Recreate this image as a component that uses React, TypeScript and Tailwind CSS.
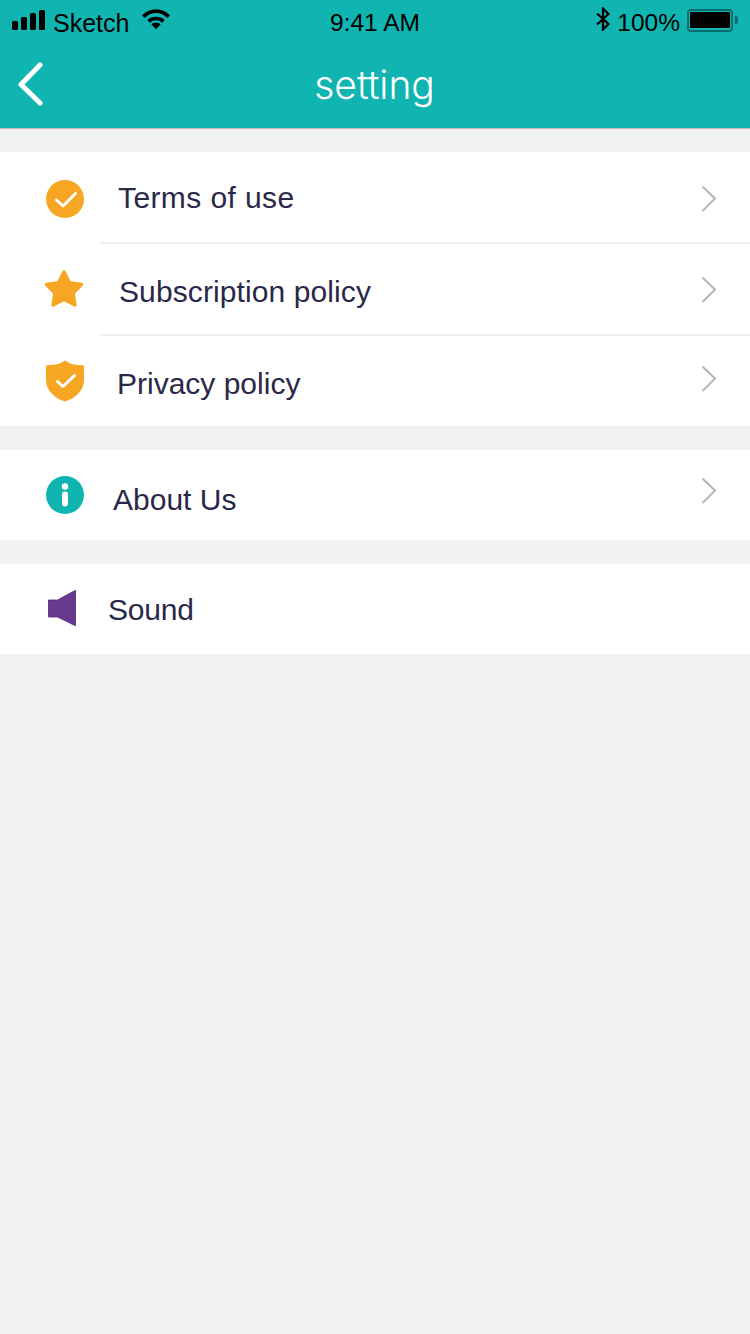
import { ReactNode } from 'react';

const Chevron = ({ className }: { className?: string }) => (
  <svg width="18" height="28" viewBox="0 0 18 28" fill="none" className={className}>
    <path d="M2.5 1.5L15 13.5L2.5 26" stroke="#b5b5b5" strokeWidth="2" />
  </svg>
);

const CheckCircle = () => (
  <svg width="38" height="38" viewBox="0 0 38 38">
    <circle cx="19" cy="19" r="19" fill="#f6a623" />
    <path d="M10.5 20L17 26L29.5 13.5" fill="none" stroke="#fff" strokeWidth="3" strokeLinecap="round" strokeLinejoin="round" />
  </svg>
);

const Star = () => (
  <svg width="42" height="40" viewBox="0 0 42 40">
    <path
      d="M21 3L26.4 13.8L38.5 15.5L30 24L32 36L21 30.4L10 36L12 24L3.5 15.5L15.6 13.8Z"
      fill="#f6a623"
      stroke="#f6a623"
      strokeWidth="3.5"
      strokeLinejoin="round"
    />
  </svg>
);

const Shield = () => (
  <svg width="38" height="42" viewBox="0 0 38 42">
    <path
      d="M19 0.5C20.5 0.5 22 3.5 28 4.6C31 5.1 34 5.2 36.5 5.2C37.5 5.2 38 5.8 38 6.8V20C38 31 28 39 19 41.5C10 39 0 31 0 20V6.8C0 5.8 0.5 5.2 1.5 5.2C4 5.2 7 5.1 10 4.6C16 3.5 17.5 0.5 19 0.5Z"
      fill="#f6a623"
    />
    <path d="M11.5 21.5L17 26.5L28.5 15.5" fill="none" stroke="#fff" strokeWidth="3" strokeLinecap="round" strokeLinejoin="round" />
  </svg>
);

const Info = () => (
  <svg width="38" height="38" viewBox="0 0 38 38">
    <circle cx="19" cy="19" r="19" fill="#10b4b0" />
    <circle cx="19" cy="10.5" r="3.2" fill="#fff" />
    <rect x="16" y="15.5" width="6" height="15" rx="3" fill="#fff" />
  </svg>
);

const Speaker = () => (
  <svg width="28" height="36" viewBox="0 0 28 36">
    <path d="M0.5 10H9.5L27 0.5C27.5 0.3 27.8 0.6 27.8 1.2V35C27.8 35.6 27.5 35.8 27 35.6L9.5 27H0.5Z" fill="#653a8e" stroke="#55247f" strokeWidth="0.8" />
  </svg>
);

const Row = ({
  icon,
  label,
  iconBox,
  textClass,
  chevronClass,
  iconClass,
}: {
  icon: ReactNode;
  label: string;
  iconBox: string;
  textClass: string;
  chevronClass?: string;
  iconClass?: string;
}) => (
  <div className="flex h-[90px] items-center bg-white pr-[32px]">
    <div className={`flex shrink-0 items-center justify-center ${iconBox} ${iconClass ?? ''}`}>{icon}</div>
    <span className={`flex-1 text-[30px] leading-none text-[#2a2848] ${textClass}`}>{label}</span>
    {chevronClass && <Chevron className={chevronClass} />}
  </div>
);

const Divider = () => (
  <div className="bg-white pl-[100px]">
    <div className="h-[2px] bg-[#efefef]" />
  </div>
);

export default function App() {
  return (
    <div className="flex min-h-[1334px] flex-col bg-[#f1f1f1] font-['Liberation_Sans',sans-serif]">
      <header className="h-[129px] border-b border-[#c9b9b5] bg-[#10b4b0]">
        {/* Status bar */}
        <div className="flex h-[40px] items-center justify-between px-[12px] text-[25px] text-black">
          <div className="flex w-[250px] items-center">
            <div className="flex items-end gap-[3px]">
              <span className="h-[9px] w-[6px] rounded-[1.5px] bg-black" />
              <span className="h-[13px] w-[6px] rounded-[1.5px] bg-black" />
              <span className="h-[17px] w-[6px] rounded-[1.5px] bg-black" />
              <span className="h-[20px] w-[6px] rounded-[1.5px] bg-black" />
            </div>
            <span className="ml-[8px] mt-[6px] leading-none">Sketch</span>
            <svg width="28" height="21" viewBox="0 0 30 22" className="mb-[2px] ml-[13px]">
              <path d="M1.5 8C9 0 21 0 28.5 8" fill="none" stroke="#000" strokeWidth="4.2" />
              <path d="M7 13C11.5 9 18.5 9 23 13" fill="none" stroke="#000" strokeWidth="3.8" />
              <path d="M10 16C13 14 17 14 20 16L15 21.5Z" fill="#000" />
            </svg>
          </div>
          <span className="mt-[6px] text-[24.5px] leading-none">9:41 AM</span>
          <div className="flex w-[250px] items-center justify-end">
            <svg width="16" height="24" viewBox="0 0 16 24" className="mb-[2px]">
              <path d="M2 6.5L13.5 17L8 22.5V1.5L13.5 7L2 17.5" fill="none" stroke="#000" strokeWidth="2.2" />
            </svg>
            <span className="ml-[6px] mt-[6px] text-[24.5px] leading-none">100%</span>
            <div className="ml-[7px] flex h-[23px] w-[46px] items-center justify-center rounded-[4px] border-2 border-[#0a6e70]">
              <div className="h-[16px] w-[40px] rounded-[1px] bg-black" />
            </div>
            <div className="ml-[2px] h-[8px] w-[3px] rounded-r-[2px] bg-[#0a6e70]" />
          </div>
        </div>
        {/* Nav bar */}
        <div className="relative flex h-[88px] items-center justify-center pr-[1px]">
          <svg width="28" height="44" viewBox="0 0 28 44" className="absolute left-[16px] top-[22px]">
            <path d="M24 3L5 22.5L24 41" fill="none" stroke="#fff" strokeWidth="5" strokeLinecap="round" strokeLinejoin="round" />
          </svg>
          <h1 className="font-['Inter',sans-serif] text-[39px] font-light leading-none text-white">setting</h1>
        </div>
      </header>

      <section className="mt-[23px]">
        <Row icon={<CheckCircle />} label="Terms of use" iconBox="ml-[46px] w-[38px]" textClass="ml-[34px] mt-[2px] tracking-[0.4px]" iconClass="mt-[4px]" chevronClass="mt-[4px]" />
        <Divider />
        <Row icon={<Star />} label="Subscription policy" iconBox="ml-[43px] w-[42px]" textClass="ml-[34px] mt-[6px] tracking-[0.1px]" chevronClass="mt-[2px]" />
        <Divider />
        <Row icon={<Shield />} label="Privacy policy" iconBox="ml-[46px] w-[38px]" textClass="ml-[33px] mt-[6px]" chevronClass="mb-[4px]" />
      </section>

      <section className="mt-[24px]">
        <Row icon={<Info />} label="About Us" iconBox="ml-[46px] w-[38px]" textClass="ml-[29px] mt-[10px]" chevronClass="mb-[8px]" />
      </section>

      <section className="mt-[24px]">
        <Row icon={<Speaker />} label="Sound" iconBox="ml-[48px] w-[28px]" textClass="ml-[32px] mt-[2px] tracking-[-0.2px]" iconClass="mb-[2px]" />
      </section>
    </div>
  );
}
